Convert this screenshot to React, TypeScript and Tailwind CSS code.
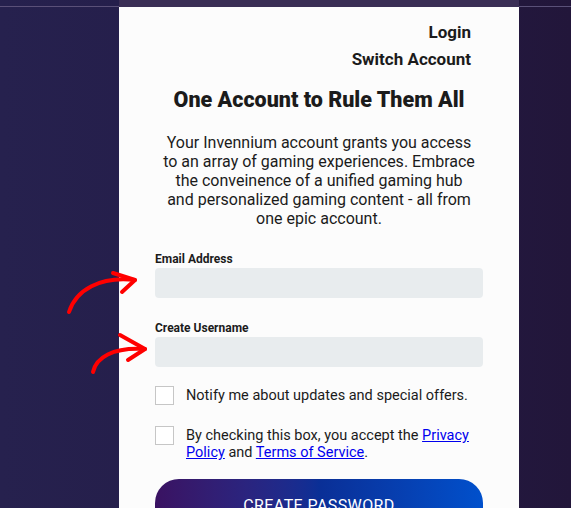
import React from 'react';

const font = { fontFamily: 'Roboto, "Liberation Sans", sans-serif' };

const Arrows = () => (
  <svg className="absolute inset-0 pointer-events-none" width={571} height={508} viewBox="0 0 571 508" fill="none">
    <g stroke="#ff0000" strokeWidth={4} strokeLinecap="round" strokeLinejoin="round">
      <path d="M69 312 C 76 290, 100 276, 135 280" />
      <path d="M113 273 L135 280 L122 292" />
      <path d="M93 372 C 96 358, 112 347, 145 349" />
      <path d="M120 335 L145 349 L128 360" />
    </g>
  </svg>
);

export default function App() {
  return (
    <div
      className="relative w-full h-[508px] overflow-hidden bg-gradient-to-r from-[#26214e] via-[#241c48] to-[#22163a] text-[#1b1b1b]"
      style={font}
    >
      <div className="flex h-[7px]">
        <div className="w-[119px] border-b border-[#5a5078]" />
        <div className="w-[400px] bg-[#3a2e55]" />
        <div className="flex-1 border-b border-[#5a5078]" />
      </div>
      <div className="pl-[119px]">
        <div className="w-[400px] h-[501px] bg-[#fcfcfc] px-9 pt-[13px]">
          <div className="flex flex-col items-end pr-3 gap-[3px] text-[17px] font-bold">
            <a className="leading-6">Login</a>
            <a className="leading-6">Switch Account</a>
          </div>
          <h1 className="mt-[15px] text-center text-[21.5px] font-black leading-7">One Account to Rule Them All</h1>
          <p className="mt-[19px] text-center text-base leading-[19px]">
            <span className="block">Your Invennium account grants you access</span>
            <span className="block">to an array of gaming experiences. Embrace</span>
            <span className="block">the conveinence of a unified gaming hub</span>
            <span className="block">and personalized gaming content - all from</span>
            <span className="block">one epic account.</span>
          </p>
          <div className="mt-[23px] flex flex-col">
            <label className="text-xs font-bold leading-4">Email Address</label>
            <input className="mt-[1px] h-[30px] w-full rounded-sm bg-[#e8ecee] outline-none" />
            <label className="mt-[22px] text-xs font-bold leading-4">Create Username</label>
            <input className="mt-[1px] h-[30px] w-full rounded-sm bg-[#e8ecee] outline-none" />
          </div>
          <div className="mt-[19px] flex items-center gap-3">
            <span className="w-[19px] h-[19px] shrink-0 border border-[#c6c6c6] bg-white" />
            <span className="text-[14.5px] leading-[17px]">Notify me about updates and special offers.</span>
          </div>
          <div className="mt-[21px] flex items-start gap-3">
            <span className="w-[19px] h-[19px] shrink-0 border border-[#c6c6c6] bg-white" />
            <span className="text-[14.5px] leading-[17px] pt-[1px]">
              By checking this box, you accept the <a className="text-[#0000ee] underline">Privacy</a>
              <br />
              <a className="text-[#0000ee] underline">Policy</a> and{' '}
              <a className="text-[#0000ee] underline">Terms of Service</a>.
            </span>
          </div>
          <button className="mt-[18px] w-full h-[54px] rounded-[24px] bg-gradient-to-r from-[#3a1262] via-[#0a2f96] to-[#0050cc] text-white text-base tracking-wide">
            CREATE PASSWORD
          </button>
        </div>
      </div>
      <Arrows />
    </div>
  );
}
